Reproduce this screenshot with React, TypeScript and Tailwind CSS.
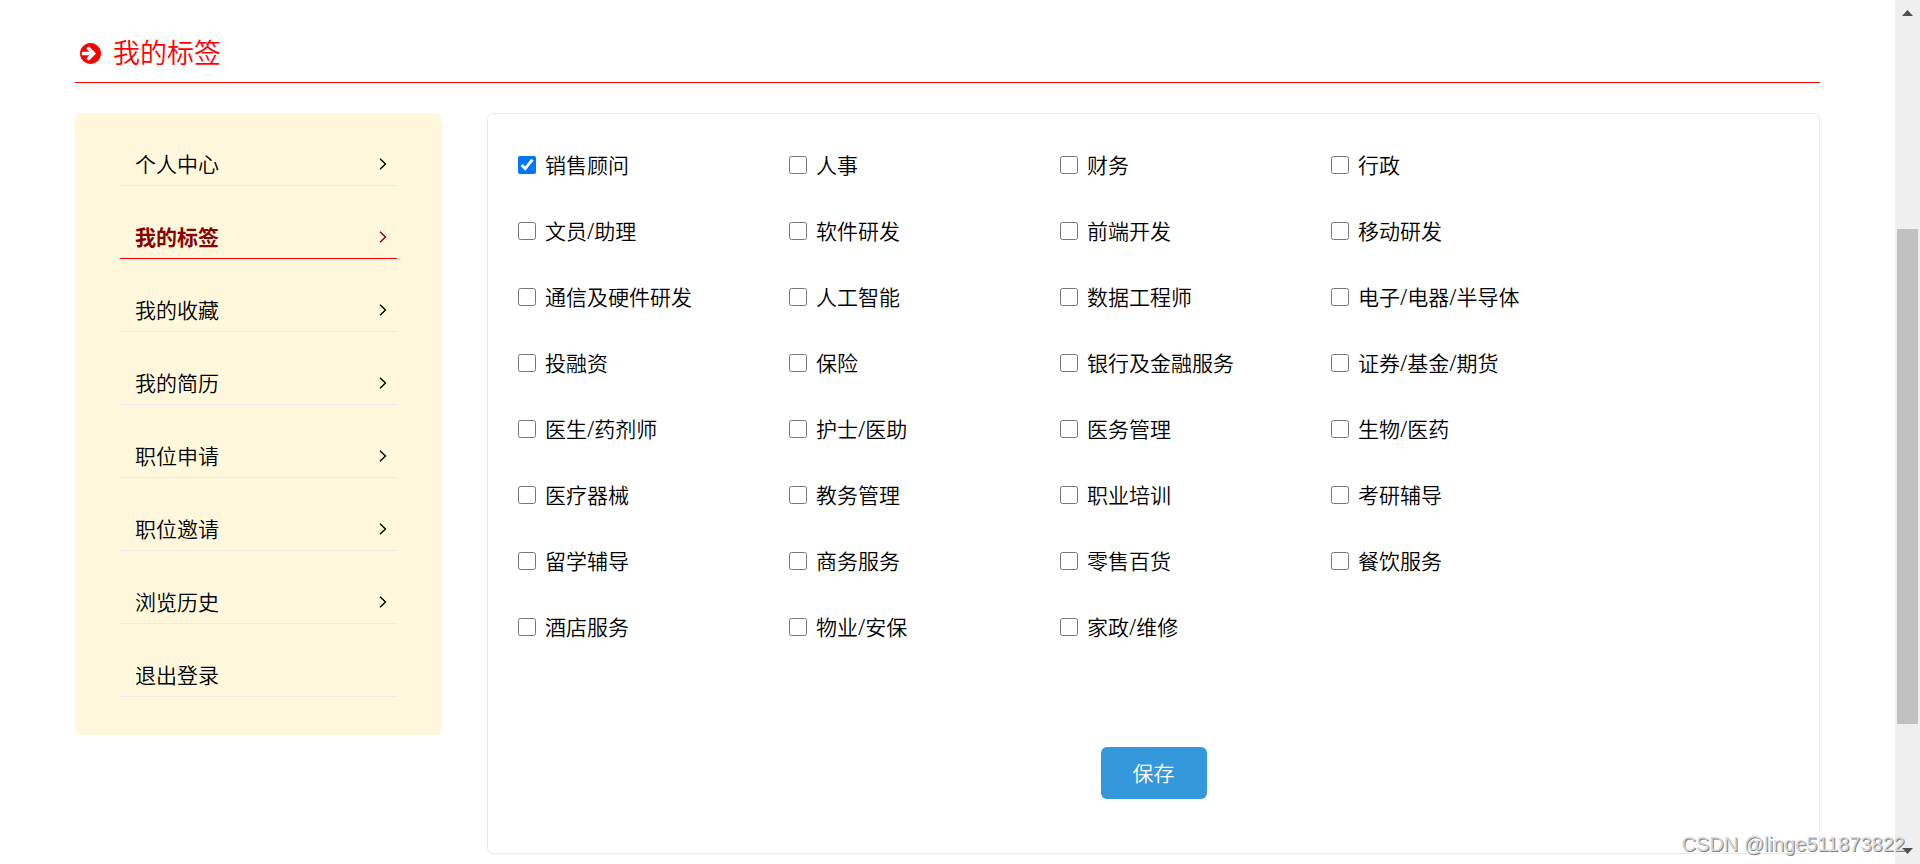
import { useState } from "react";

const menus = [
  "个人中心",
  "我的标签",
  "我的收藏",
  "我的简历",
  "职位申请",
  "职位邀请",
  "浏览历史",
  "退出登录",
];

const tags = [
  "销售顾问", "人事", "财务", "行政",
  "文员/助理", "软件研发", "前端开发", "移动研发",
  "通信及硬件研发", "人工智能", "数据工程师", "电子/电器/半导体",
  "投融资", "保险", "银行及金融服务", "证券/基金/期货",
  "医生/药剂师", "护士/医助", "医务管理", "生物/医药",
  "医疗器械", "教务管理", "职业培训", "考研辅导",
  "留学辅导", "商务服务", "零售百货", "餐饮服务",
  "酒店服务", "物业/安保", "家政/维修",
];

function ArrowCircle() {
  return (
    <svg className="size-[21px]" viewBox="128 128 1536 1536" fill="currentColor" aria-hidden="true">
      <path d="M1285 896q0-27-18-45l-91-91-362-362q-18-18-45-18t-45 18l-91 91q-18 18-18 45t18 45l189 189h-502q-26 0-45 19t-19 45v128q0 26 19 45t45 19h502l-189 189q-19 19-19 45t19 45l91 91q18 18 45 18t45-18l362-362 91-91q18-18 18-45zm379 0q0 209-103 385.5t-279.5 279.5-385.5 103-385.5-103-279.5-279.5-103-385.5 103-385.5 279.5-279.5 385.5-103 385.5 103 279.5 279.5 103 385.5z" />
    </svg>
  );
}

function SideMenu() {
  return (
    <nav className="w-[367px] shrink-0 rounded-md bg-[#fff8dc] px-[45px] pb-[38px]">
      {menus.map((name, i) => {
        const active = name === "我的标签";
        return (
          <a
            key={name}
            href="#"
            className={`flex h-[73px] items-end border-b ${
              active
                ? "border-[#ff0000] font-bold text-[#8b0000]"
                : "border-[#ebebf0] text-black"
            }`}
          >
            <span className="flex h-[42px] w-full items-center justify-between pr-[10px] pl-[15px]">
              {name}
              {i < menus.length - 1 && (
                <svg width="8" height="12" viewBox="0 0 8 12" fill="none" aria-hidden="true">
                  <path d="M1 0.7L6.5 6L1 11.3" stroke="currentColor" strokeWidth="1.4" />
                </svg>
              )}
            </span>
          </a>
        );
      })}
    </nav>
  );
}

function TagPanel() {
  const [checked, setChecked] = useState(["销售顾问"]);

  const toggle = (tag: string) =>
    setChecked((prev) =>
      prev.includes(tag) ? prev.filter((t) => t !== tag) : [...prev, tag]
    );

  return (
    <form
      onSubmit={(e) => e.preventDefault()}
      className="min-w-0 flex-1 rounded-md border border-[#ebebeb] px-[30px] pt-[18px] pb-[54px]"
    >
      <div className="grid grid-cols-[repeat(auto-fill,271px)]">
        {tags.map((tag) => (
          <label key={tag} className="flex h-[66px] items-center gap-[9px]">
            <input
              type="checkbox"
              checked={checked.includes(tag)}
              onChange={() => toggle(tag)}
              className="size-[18px] accent-[#0075ff]"
            />
            {tag}
          </label>
        ))}
      </div>
      <div className="mt-[87px] flex justify-center">
        <button type="submit" className="h-[52px] rounded-md bg-[#3498db] px-8 text-white">
          保存
        </button>
      </div>
    </form>
  );
}

function ScrollTrack() {
  return (
    <div className="flex w-[25px] shrink-0 flex-col items-center bg-[#f0f0f0] py-[10px]" aria-hidden="true">
      <svg width="11" height="6" viewBox="0 0 11 6">
        <path d="M0 6L5.5 0L11 6Z" fill="#505050" />
      </svg>
      <div className="flex w-full grow flex-col items-center">
        <div className="grow-[213]" />
        <div className="w-[21px] grow-[495] bg-[#c1c1c1]" />
        <div className="grow-[124]" />
      </div>
      <svg width="11" height="6" viewBox="0 0 11 6">
        <path d="M0 0L5.5 6L11 0Z" fill="#505050" />
      </svg>
    </div>
  );
}

export default function App() {
  return (
    <div className="relative flex min-h-screen bg-white font-['Noto_Sans','Noto_Sans_CJK_SC',sans-serif] text-[21px] leading-8 font-[350] text-black">
      <div className="min-w-0 flex-1 px-[75px] pb-[10px]">
        {/* Page title */}
        <header className="flex h-[83px] items-center gap-3 border-b border-[#ff0000] pt-6 pl-[5px] text-[#ff0000]">
          <ArrowCircle />
          <h1 className="text-[27px] font-[350]">我的标签</h1>
        </header>

        <main className="mt-[30px] flex items-start gap-[45px]">
          <SideMenu />
          <TagPanel />
        </main>
      </div>
      <ScrollTrack />

      <span className="absolute right-[15px] bottom-2 font-['Liberation_Sans',sans-serif] text-[20px] leading-6 font-normal text-[#d8d8d8] [text-shadow:1px_1px_0_#808080]">
        CSDN @linge511873822
      </span>
    </div>
  );
}
